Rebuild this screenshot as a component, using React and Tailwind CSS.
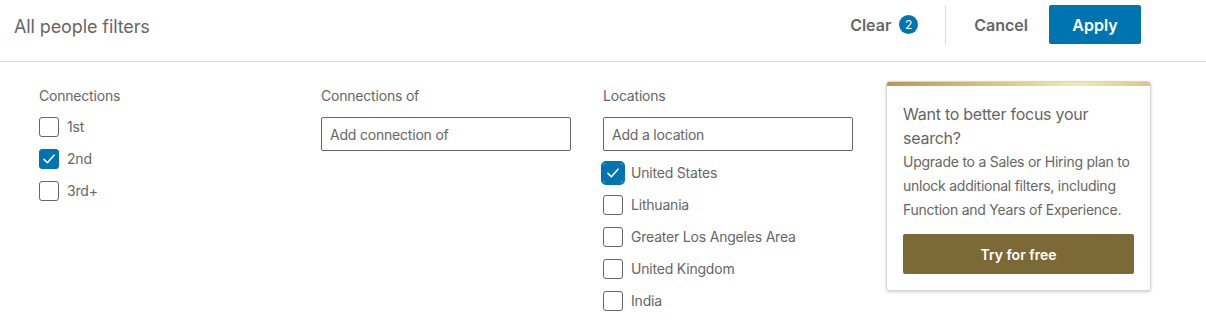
import { useState } from "react";

const FONT = "font-['Inter','Noto_Sans',sans-serif]";

const Checkbox = ({ label, checked, focused, onToggle }) => (
  <label className="flex items-center h-5 gap-2 cursor-pointer select-none" onClick={onToggle}>
    <span
      className={`flex items-center justify-center shrink-0 w-5 h-5 rounded-[3px] border ${
        checked ? "bg-[#0073b1] border-[#0073b1]" : "bg-white border-[#666]"
      } ${focused ? "outline outline-2 outline-[#0073b1] outline-offset-0" : ""}`}
    >
      {checked && (
        <svg width="14" height="14" viewBox="0 0 14 14" fill="none">
          <path d="M2 7.4 5.4 10.8 12 3.2" stroke="white" strokeWidth="1.6" strokeLinecap="round" strokeLinejoin="round" />
        </svg>
      )}
    </span>
    <span className="text-[14px] leading-5 tracking-[-0.2px] text-[#666]">{label}</span>
  </label>
);

const TextInput = ({ placeholder }) => (
  <input
    type="text"
    placeholder={placeholder}
    className="w-[250px] h-[34px] px-2 border border-[#666] rounded-[2px] text-[14px] tracking-[-0.2px] text-[#333] placeholder:text-[#666] outline-none"
  />
);

const App = () => {
  const [connections, setConnections] = useState({ "1st": false, "2nd": true, "3rd+": false });
  const [locations, setLocations] = useState({
    "United States": true,
    Lithuania: false,
    "Greater Los Angeles Area": false,
    "United Kingdom": false,
    India: false,
  });

  const toggle = (setter, key) => setter((prev) => ({ ...prev, [key]: !prev[key] }));

  return (
    <div className={`${FONT} w-[1206px] h-[329px] bg-white overflow-hidden`}>
      <header className="h-[62px] border-b border-[#dcdcdc] flex items-start pt-[5px] pl-[14px] pr-[65px]">
        <h1 className="h-[39px] pt-[3px] flex items-center text-[18px] tracking-[-0.1px] text-[#666] font-normal">
          All people filters
        </h1>
        <div className="ml-auto flex items-center h-[39px]">
          <button type="button" className="flex items-center gap-2 text-[16px] font-semibold text-[#666]">
            Clear
            <span className="w-[19px] h-[19px] rounded-full bg-[#0073b1] text-white text-[12px] font-normal flex items-center justify-center">
              2
            </span>
          </button>
          <span className="w-px h-[40px] bg-[#dcdcdc] ml-[27px] mr-[28px]" />
          <button type="button" className="text-[16px] font-semibold text-[#666] mr-[21px]">
            Cancel
          </button>
          <button type="button" className="w-[92px] h-[39px] rounded-[2px] bg-[#0073b1] text-white text-[16px] font-semibold">
            Apply
          </button>
        </div>
      </header>

      <div className="flex items-start pl-[39px] pt-[19px]">
        <section className="w-[282px] pt-[5px]">
          <h3 className="text-[14px] leading-5 tracking-[-0.2px] text-[#666] mb-[11px]">Connections</h3>
          <div className="flex flex-col gap-3">
            {Object.keys(connections).map((key) => (
              <Checkbox key={key} label={key} checked={connections[key]} onToggle={() => toggle(setConnections, key)} />
            ))}
          </div>
        </section>

        <section className="w-[282px] pt-[5px]">
          <h3 className="text-[14px] leading-5 tracking-[-0.2px] text-[#666] mb-[11px]">Connections of</h3>
          <TextInput placeholder="Add connection of" />
        </section>

        <section className="w-[283px] pt-[5px]">
          <h3 className="text-[14px] leading-5 tracking-[-0.2px] text-[#666] mb-[11px]">Locations</h3>
          <TextInput placeholder="Add a location" />
          <div className="flex flex-col gap-3 mt-3">
            {Object.keys(locations).map((key, i) => (
              <Checkbox
                key={key}
                label={key}
                checked={locations[key]}
                focused={i === 0}
                onToggle={() => toggle(setLocations, key)}
              />
            ))}
          </div>
        </section>

        <aside className="w-[265px] rounded-[3px] border border-[#d6d6d6] shadow-[0_1px_3px_rgba(0,0,0,0.2)] overflow-hidden">
          <div className="h-[4px] bg-[linear-gradient(90deg,#b39a57_0%,#d9c98c_45%,#f1e8ba_72%,#d8c78e_100%)]" />
          <div className="px-4 pt-4 pb-4">
            <p className="text-[16px] leading-6 tracking-[-0.25px] text-[#666]">Want to better focus your search?</p>
            <p className="text-[14px] leading-6 tracking-[-0.25px] text-[#666]">
              Upgrade to a Sales or Hiring plan to unlock additional filters, including Function and Years of Experience.
            </p>
            <button
              type="button"
              className="mt-3 w-full h-[40px] rounded-[2px] bg-[#7b6a36] text-white text-[14px] font-semibold"
            >
              Try for free
            </button>
          </div>
        </aside>
      </div>
    </div>
  );
};

export default App;
